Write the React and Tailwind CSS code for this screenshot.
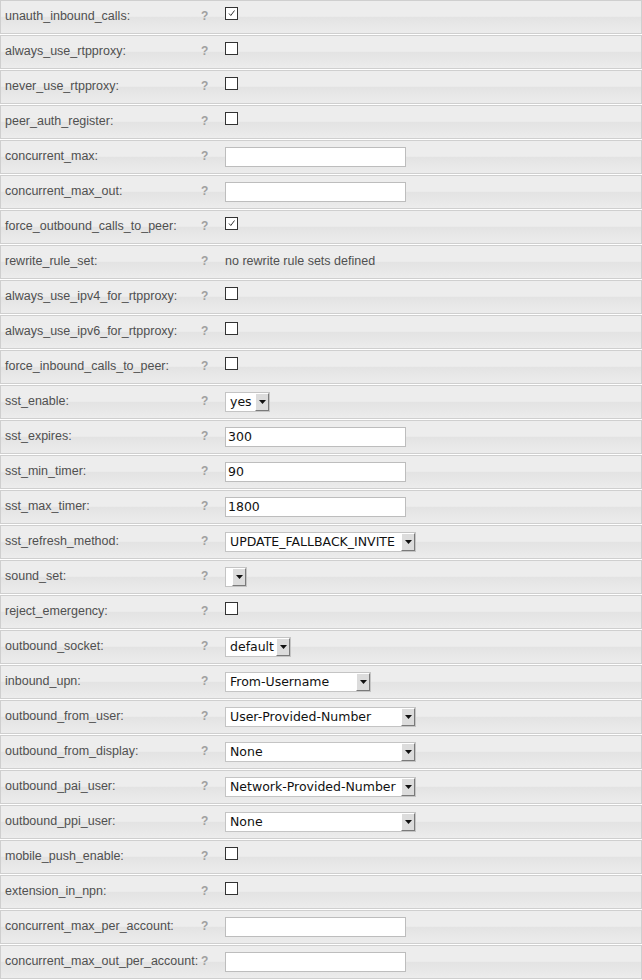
import React from 'react';

const rows = [
  { label: 'unauth_inbound_calls:', type: 'check', checked: true },
  { label: 'always_use_rtpproxy:', type: 'check' },
  { label: 'never_use_rtpproxy:', type: 'check' },
  { label: 'peer_auth_register:', type: 'check' },
  { label: 'concurrent_max:', type: 'input', value: '' },
  { label: 'concurrent_max_out:', type: 'input', value: '' },
  { label: 'force_outbound_calls_to_peer:', type: 'check', checked: true },
  { label: 'rewrite_rule_set:', type: 'text', value: 'no rewrite rule sets defined' },
  { label: 'always_use_ipv4_for_rtpproxy:', type: 'check' },
  { label: 'always_use_ipv6_for_rtpproxy:', type: 'check' },
  { label: 'force_inbound_calls_to_peer:', type: 'check' },
  { label: 'sst_enable:', type: 'select', value: 'yes', width: 45 },
  { label: 'sst_expires:', type: 'input', value: '300' },
  { label: 'sst_min_timer:', type: 'input', value: '90' },
  { label: 'sst_max_timer:', type: 'input', value: '1800' },
  { label: 'sst_refresh_method:', type: 'select', value: 'UPDATE_FALLBACK_INVITE', width: 191 },
  { label: 'sound_set:', type: 'select', value: '', width: 22 },
  { label: 'reject_emergency:', type: 'check' },
  { label: 'outbound_socket:', type: 'select', value: 'default', width: 66 },
  { label: 'inbound_upn:', type: 'select', value: 'From-Username', width: 146 },
  { label: 'outbound_from_user:', type: 'select', value: 'User-Provided-Number', width: 191 },
  { label: 'outbound_from_display:', type: 'select', value: 'None', width: 191 },
  { label: 'outbound_pai_user:', type: 'select', value: 'Network-Provided-Number', width: 191 },
  { label: 'outbound_ppi_user:', type: 'select', value: 'None', width: 191 },
  { label: 'mobile_push_enable:', type: 'check' },
  { label: 'extension_in_npn:', type: 'check' },
  { label: 'concurrent_max_per_account:', type: 'input', value: '' },
  { label: 'concurrent_max_out_per_account:', type: 'input', value: '' },
];

function Checkbox({ checked }) {
  return (
    <div className="w-[13px] h-[13px] mt-[6px] border border-[#333] bg-white">
      {checked && (
        <svg width="11" height="11" viewBox="0 0 11 11">
          <polyline points="3,5.5 4.8,7.5 8.5,2.5" fill="none" stroke="#333" strokeWidth="1" />
        </svg>
      )}
    </div>
  );
}

function TextBox({ value }) {
  return (
    <div className="w-[181px] h-[20px] mt-[6px] border border-[#bdbdbd] bg-white pl-[2px] text-[12.5px] leading-[18px] text-[#111] font-['DejaVu_Sans',sans-serif]">
      {value}
    </div>
  );
}

function Select({ value, width }) {
  return (
    <div
      className="h-[20px] mt-[6px] flex border border-[#c4c4c4] bg-white"
      style={{ width }}
    >
      <div className="flex-1 pl-[4px] text-[12.5px] leading-[18px] text-[#111] font-['DejaVu_Sans',sans-serif] whitespace-nowrap overflow-hidden">
        {value}
      </div>
      <div className="w-[14px] h-[18px] flex items-center justify-center bg-[#dcdcdc] border-l border-t border-l-white border-t-white border-r border-b border-r-[#7a7a7a] border-b-[#7a7a7a]">
        <svg width="7" height="4" viewBox="0 0 7 4">
          <polygon points="0,0 7,0 3.5,4" fill="#111" />
        </svg>
      </div>
    </div>
  );
}

function Row({ row }) {
  return (
    <div className="flex h-[34px] border border-[#cfcfcf] bg-[linear-gradient(to_bottom,#ededed_0%,#ededed_48%,#e3e3e3_50%,#ececec_100%)]">
      <div className="w-[200px] pl-[4px] pt-[8px] text-[12.5px] leading-[14px] text-[#505050] whitespace-nowrap">
        {row.label}
      </div>
      <div className="w-[24px] pt-[8px] text-[12px] leading-[14px] font-bold text-[#a0a0a0]">?</div>
      <div>
        {row.type === 'check' && <Checkbox checked={row.checked} />}
        {row.type === 'input' && <TextBox value={row.value} />}
        {row.type === 'select' && <Select value={row.value} width={row.width} />}
        {row.type === 'text' && (
          <div className="pt-[8px] text-[12.5px] leading-[14px] text-[#505050]">{row.value}</div>
        )}
      </div>
    </div>
  );
}

export default function App() {
  return (
    <div className="bg-white w-[642px] flex flex-col gap-px font-['Liberation_Sans',Arial,sans-serif]">
      {rows.map((row) => (
        <Row key={row.label} row={row} />
      ))}
    </div>
  );
}
